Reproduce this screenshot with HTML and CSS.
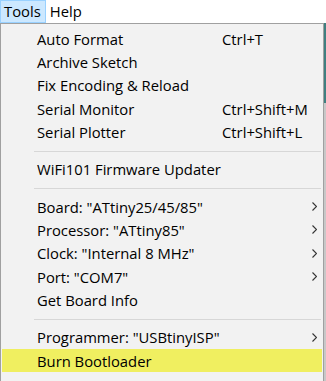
FILE: index.html
```html
<!DOCTYPE html>
<html lang="en">
  <head>
    <meta charset="UTF-8" />
    <title>Tools menu</title>
    <link rel="stylesheet" href="styles.css">
  </head>
  <body>
    <div class="menubar">
      <span class="menu-title active">Tools</span>
      <span class="menu-title">Help</span>
    </div>
    <div class="drop-row">
      <div class="dropdown">
        <div class="item"><span class="label">Auto Format</span><span class="shortcut">Ctrl+T</span></div>
        <div class="item"><span class="label">Archive Sketch</span></div>
        <div class="item"><span class="label">Fix Encoding &amp; Reload</span></div>
        <div class="item"><span class="label">Serial Monitor</span><span class="shortcut">Ctrl+Shift+M</span></div>
        <div class="item"><span class="label">Serial Plotter</span><span class="shortcut">Ctrl+Shift+L</span></div>
        <div class="sep"></div>
        <div class="item"><span class="label">WiFi101 Firmware Updater</span></div>
        <div class="sep"></div>
        <div class="item sub"><span class="label">Board: "ATtiny25/45/85"</span><svg class="arrow" width="5" height="9" viewBox="0 0 5 9"><polyline points="0.5,0.5 4.5,4.5 0.5,8.5" /></svg></div>
        <div class="item sub"><span class="label">Processor: "ATtiny85"</span><svg class="arrow" width="5" height="9" viewBox="0 0 5 9"><polyline points="0.5,0.5 4.5,4.5 0.5,8.5" /></svg></div>
        <div class="item sub"><span class="label">Clock: "Internal 8 MHz"</span><svg class="arrow" width="5" height="9" viewBox="0 0 5 9"><polyline points="0.5,0.5 4.5,4.5 0.5,8.5" /></svg></div>
        <div class="item sub"><span class="label">Port: "COM7"</span><svg class="arrow" width="5" height="9" viewBox="0 0 5 9"><polyline points="0.5,0.5 4.5,4.5 0.5,8.5" /></svg></div>
        <div class="item"><span class="label">Get Board Info</span></div>
        <div class="sep"></div>
        <div class="item sub"><span class="label">Programmer: "USBtinyISP"</span><svg class="arrow" width="5" height="9" viewBox="0 0 5 9"><polyline points="0.5,0.5 4.5,4.5 0.5,8.5" /></svg></div>
        <div class="item hover"><span class="label">Burn Bootloader</span></div>
      </div>
      <div class="behind"></div>
    </div>
  </body>
</html>
```

FILE: styles.css
```css
body {
  margin: 0;
  background-color: #fff;
  font-family: "Open Sans", "Noto Sans", sans-serif;
  font-size: 14.8px;
  color: #000;
  overflow: hidden;
}
.menubar {
  display: flex;
  height: 23px;
  align-items: stretch;
}
.menu-title {
  padding: 0 4px 0 3px;
  line-height: 21px;
  border: 1px solid transparent;
  height: 21px;
}
.menu-title.active {
  background-color: #cce8ff;
  border-color: #99d1ff;
}
.drop-row {
  display: flex;
}
.dropdown {
  width: 322px;
  border: 1px solid #a0a0a0;
  background-color: #f2f2f2;
  padding: 3px 0 2px 0;
}
.item {
  display: flex;
  align-items: center;
  height: 23.33px;
  margin: 0 1px;
  padding-left: 35px;
}
.label {
  width: 185px;
  white-space: nowrap;
}
.shortcut {
  white-space: nowrap;
}
.arrow {
  margin-left: auto;
  margin-right: 5px;
}
.arrow polyline {
  fill: none;
  stroke: #333;
  stroke-width: 1.1;
}
.item.hover {
  background-color: #f0ef60;
}
.sep {
  height: 1px;
  background-color: #d7d7d7;
  margin: 7px 2px 6px 33px;
}
.behind {
  width: 2px;
  height: 360px;
  background: linear-gradient(#3f7f80 0, #3f7f80 80px, #c8c8c8 80px);
}
```
